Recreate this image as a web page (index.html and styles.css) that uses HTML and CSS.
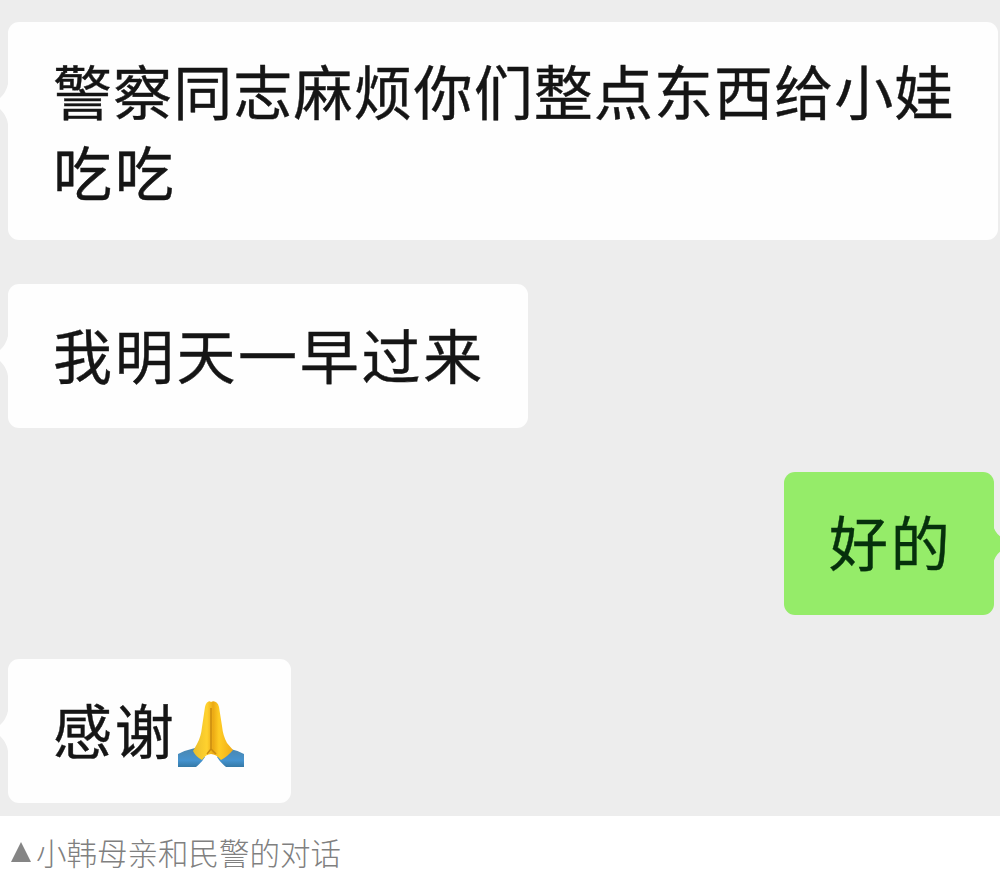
FILE: index.html
```html
<!DOCTYPE html>
<html lang="zh-CN">
<head>
<meta charset="utf-8">
<title>对话</title>
<link rel="stylesheet" href="styles.css">
</head>
<body>
<figure class="figure">
  <div class="chat">
    <div class="bubble received wide">
      <svg class="tail" viewBox="0 0 8 40"><path d="M8 0V40Q7 32 0 25V14Q6 9 8 0Z"/></svg>
      <p class="text"><span class="tight">警察同志麻烦你们整点东西给小娃</span><br>吃吃</p>
    </div>
    <div class="bubble received">
      <svg class="tail" viewBox="0 0 8 40"><path d="M8 0V40Q7 32 0 25V14Q6 9 8 0Z"/></svg>
      <p class="text">我明天一早过来</p>
    </div>
    <div class="bubble sent">
      <svg class="tail" viewBox="0 0 8 40"><path d="M0 0Q1 8 8 13V27Q2 31 0 40Z"/></svg>
      <p class="text">好的</p>
    </div>
    <div class="bubble received thanks">
      <svg class="tail" viewBox="0 0 8 40"><path d="M8 0V40Q7 32 0 25V14Q6 9 8 0Z"/></svg>
      <p class="text">感谢</p>
      <svg class="pray" viewBox="0 0 68 68" role="img" aria-label="双手合十">
        <defs>
          <linearGradient id="skin" x1="0" x2="1"><stop offset="0" stop-color="#e9bd2c"/><stop offset=".35" stop-color="#ffd22e"/><stop offset=".5" stop-color="#eba914"/><stop offset=".65" stop-color="#ffcc24"/><stop offset="1" stop-color="#f0ac18"/></linearGradient>
          <linearGradient id="cuff" x1="0" y1="0" x2="0" y2="1"><stop offset="0" stop-color="#4b86ad"/><stop offset=".65" stop-color="#4593cf"/><stop offset="1" stop-color="#3579a6"/></linearGradient>
        </defs>
        <path fill="url(#cuff)" d="M1 54Q9 50 18 48L28 57Q25 62 19 67H1Z"/>
        <path fill="url(#cuff)" d="M67 54Q59 50 50 48L40 57Q43 62 49 67H67Z"/>
        <path fill="url(#skin)" d="M34 2C37 0 41 2 42 7L45 26Q46 36 50 43L56 50Q50 57 44 60Q39 54 34 54Q29 54 25 60Q19 57 16 51L20 44Q24 37 25 27L28 7C29 2 32 0 34 2Z"/>
        <path fill="none" stroke="#c98b10" stroke-width="1.5" d="M34 8V49L30 54M34 49L39 54"/>
      </svg>
    </div>
  </div>
  <figcaption class="caption">
    <svg class="marker" viewBox="0 0 20 20"><path d="M10 0L20 20H0Z"/></svg>
    <span>小韩母亲和民警的对话</span>
  </figcaption>
</figure>
</body>
</html>
```
FILE: styles.css
```css
* { box-sizing: border-box; }
body { margin: 0; background: #fff; overflow: hidden; }
.figure { margin: 0; }
.chat {
  height: 816px;
  padding: 22px 6px 0 8px;
  display: flex;
  flex-direction: column;
  align-items: flex-start;
  gap: 44px;
  background: #ededed;
}
.bubble {
  position: relative;
  display: flex;
  align-items: center;
  height: 143.6px;
  padding: 0 43px 0 45px;
  border-radius: 11px;
  background: #fefefe;
}
.wide {
  width: 990px;
  height: 218px;
  margin-right: -6px;
}
.sent {
  align-self: flex-end;
  width: 210px;
  background: #95ec69;
}
.text {
  margin: 0;
  padding-bottom: 5px;
  color: #151515;
  font: 400 59px/81px "Noto Sans CJK SC", sans-serif;
  letter-spacing: 2.7px;
  white-space: nowrap;
  -webkit-text-stroke: 0.4px currentColor;
}
.wide .text { padding-bottom: 3px; }
.tight { letter-spacing: 1.1px; }
.sent .text { color: #06300c; }
.tail {
  position: absolute;
  left: -8px;
  top: 52px;
  width: 8px;
  height: 40px;
  fill: #fefefe;
}
.wide .tail { top: 62px; }
.sent .tail {
  left: auto;
  right: -7px;
  fill: #95ec69;
}
.pray {
  width: 68px;
  height: 68px;
  margin: 6px 0 0 1px;
}
.thanks { width: 283px; }
.caption {
  display: flex;
  align-items: center;
  height: 67px;
  padding: 5px 0 0 11px;
  gap: 5px;
  color: #808080;
  font: 300 30.5px/40px "Noto Sans CJK SC", sans-serif;
}
.marker { width: 20px; height: 20px; fill: #858585; }
```
